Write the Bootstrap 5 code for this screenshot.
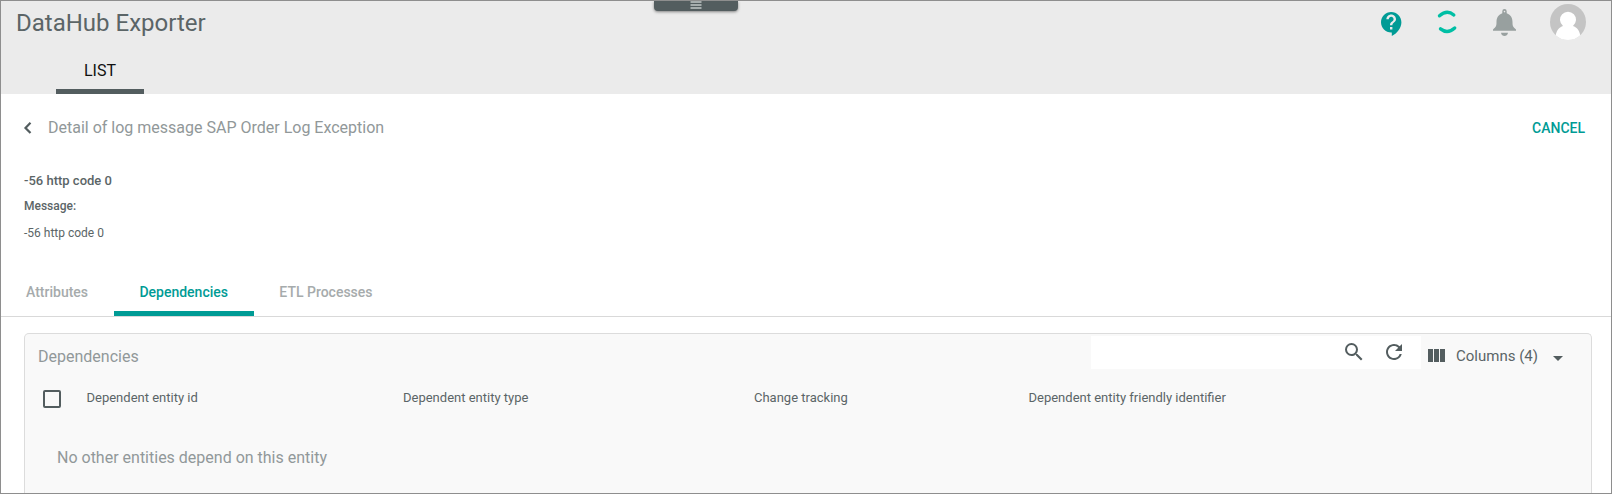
<!DOCTYPE html>
<html lang="en">
<head>
<meta charset="utf-8">
<title>DataHub Exporter</title>
<link href="https://cdn.jsdelivr.net/npm/bootstrap@5.3.0/dist/css/bootstrap.min.css" rel="stylesheet">
<style>
body{font-family:Roboto,"Liberation Sans",sans-serif;color:#5b6567;background:#fff}
svg{display:block;flex:none}
.app-frame{height:494px;border:1px solid #8e8e8e}
.app-head{height:93px;background:#ebebeb}
.app-title{font-size:24px;line-height:28px;padding:8px 0 0 15px;font-weight:400;margin:0;color:#5b6567}
.drawer-grip{top:0;left:653px;width:84px;height:10px;background:#535d5f;border-radius:0 0 4px 4px;box-shadow:0 1px 3px rgba(0,0,0,.45)}
.main-tab{width:88px;height:45px;margin-left:55px;border-bottom:5px solid #535d5f;color:#111;font-size:16px;line-height:44px}
.head-icons{height:42px}
.detail-bar{height:66px;padding:1px 26px 0 19px;font-size:16px;color:#919899}
.detail-bar .lead-text{padding-left:14px}
.btn-cancel{font-size:14px;font-weight:500;color:#009b95;line-height:20px}
.log-info{padding-left:23px;height:114px;line-height:20px}
.log-name{font-size:13px;font-weight:500;padding-top:11px}
.log-label{font-size:12px;font-weight:500;padding-top:5px}
.log-text{font-size:12px;padding-top:7px}
.sub-tabs{height:43px;border-bottom:1px solid #d9d9d9;font-size:14px;font-weight:500;color:#a6abac}
.sub-tabs .nav-link{color:inherit;padding:0 25.7px;line-height:36px;height:42px}
.sub-tabs .nav-link:first-child{padding-left:25px}
.sub-tabs .nav-link.active{color:#009b95;border-bottom:5px solid #009b95}
.dep-panel{margin:16px 19px 0 23px;height:170px;background:#f9f9f9;border:1px solid #dcdcdc;border-radius:5px 5px 0 0;border-bottom:0}
.dep-title{font-size:16px;color:#919899;padding:12px 0 0 13px;line-height:22px}
.search-box{width:330px;height:33px;margin-top:2px;background:#fff;padding:4px 15px 0 0;gap:16px}
.col-picker{width:170px;font-size:15px;padding:0 21px 0 3px;height:44px}
.check-sq{width:18px;height:18px;border:2px solid #535d5f;border-radius:2px;margin:6px 0 0 18px}
.dep-cols{height:47px;grid-template-columns:61.5px 316.5px 351px 274.5px 1fr;font-size:13px;line-height:36px}
.dep-empty{font-size:16px;color:#919899;padding:19px 0 0 32px}
</style>
</head>
<body>
<div class="app-frame position-relative overflow-hidden">
  <header class="app-head d-flex justify-content-between">
    <div>
      <h1 class="app-title">DataHub Exporter</h1>
      <div class="pt-2 mt-1"><div class="main-tab text-center">LIST</div></div>
    </div>
    <div class="head-icons d-flex me-2">
      <svg width="231" height="42" viewBox="1372 1 231 42">
        <path transform="translate(1377.4 9.6) scale(1.2)" fill="#009b95" d="M11.5 2C6.81 2 3 5.81 3 10.5S6.81 19 11.5 19h.5v3c4.86-2.34 8-7 8-11.5C20 5.81 16.19 2 11.5 2zm1 14.5h-2v-2h2v2zm0-3.5h-2c0-3.25 3-3 3-5 0-1.1-.9-2-2-2s-2 .9-2 2h-2c0-2.21 1.79-4 4-4s4 1.79 4 4c0 2.5-3 2.75-3 5z"/>
        <path d="M1439.500 15.800Q1447 9.300 1453.800 15M1440.500 28.900Q1447.500 34.500 1454.700 28" fill="none" stroke="#00bfa5" stroke-width="3.400" stroke-linecap="round"/>
        <path fill="#98a09f" fill-rule="evenodd" d="M1502.300 13.200V11.300a2.200 2.200 0 0 1 4.400 0v1.900c4.300 1.500 5.800 5 5.800 8.800 0 4 .4 5 3.500 7.500v1.300h-23v-1.300c3.100-2.500 3.500-3.500 3.500-7.500 0-3.800 1.500-7.300 5.800-8.800zM1503.700 11.600a.8.8 0 1 0 1.600 0a.8.8 0 1 0-1.600 0zM1501 32.700h7c-.6 4.300-6.400 4.300-7 0z"/>
        <circle cx="1568" cy="22" r="18" fill="#c4c4c4"/>
        <path fill="#fff" d="M1555.700 35.200c1-5 3.800-8.200 7.300-9.200a8 8 0 1 1 10 0c3.500 1 6.300 4.200 7.300 9.200a18 18 0 0 1-24.600 0z"/>
      </svg>
    </div>
  </header>
  <div class="drawer-grip position-absolute"><svg width="84" height="10"><path d="M36.500 1h11M36.500 4h11M36.500 7h11" stroke="#c2c8c7" stroke-width="1.700"/></svg></div>

  <div class="detail-bar d-flex align-items-center">
    <svg width="14" height="14" viewBox="20 120 14 14"><path d="M30.500 121.800L25.500 126.900l5 5.100" fill="none" stroke="#535d5f" stroke-width="2.200"/></svg>
    <span class="lead-text">Detail of log message SAP Order Log Exception</span>
    <span class="btn-cancel ms-auto">CANCEL</span>
  </div>
  <div class="log-info">
    <div class="log-name">-56 http code 0</div>
    <div class="log-label">Message:</div>
    <div class="log-text">-56 http code 0</div>
  </div>
  <nav class="sub-tabs nav">
    <a class="nav-link">Attributes</a>
    <a class="nav-link active">Dependencies</a>
    <a class="nav-link">ETL Processes</a>
  </nav>
  <section class="dep-panel">
    <div class="d-flex" style="height:46px">
      <div class="dep-title me-auto">Dependencies</div>
      <div class="search-box d-flex justify-content-end">
        <svg width="24" height="24" viewBox="0 0 24 24" fill="#535d5f"><path d="M15.500 14h-.79l-.28-.27A6.471 6.471 0 0 0 16 9.500 6.500 6.500 0 1 0 9.500 16c1.610 0 3.090-.59 4.230-1.570l.27.28v.79l5 4.990L20.490 19l-4.990-5zm-6 0C7.010 14 5 11.990 5 9.500S7.010 5 9.500 5 14 7.010 14 9.500 11.990 14 9.500 14z"/></svg>
        <svg width="24" height="24" viewBox="0 0 24 24" fill="#535d5f"><path d="M17.650 6.350A7.958 7.958 0 0 0 12 4c-4.420 0-7.990 3.580-7.990 8s3.570 8 7.990 8c3.730 0 6.840-2.550 7.730-6h-2.080A5.990 5.990 0 0 1 12 18c-3.310 0-6-2.690-6-6s2.690-6 6-6c1.660 0 3.140.69 4.220 1.780L13 11h7V4l-2.350 2.350z"/></svg>
      </div>
      <div class="col-picker d-flex align-items-center">
        <svg width="24" height="24" viewBox="0 0 24 24" fill="#535d5f"><path d="M10 18h5V5h-5v13zm-6 0h5V5H4v13zM16 5v13h5V5h-5z"/></svg>
        <span class="ms-2">Columns (4)</span>
        <svg class="ms-auto" width="24" height="24" viewBox="0 -2 24 24" fill="#535d5f"><path d="M7 10l5 5 5-5z"/></svg>
      </div>
    </div>
    <div class="dep-cols d-grid">
      <div class="pt-1"><div class="check-sq"></div></div>
      <span>Dependent entity id</span><span>Dependent entity type</span><span>Change tracking</span><span>Dependent entity friendly identifier</span>
    </div>
    <div class="dep-empty">No other entities depend on this entity</div>
  </section>
</div>
<script src="https://cdn.jsdelivr.net/npm/bootstrap@5.3.0/dist/js/bootstrap.bundle.min.js"></script>
</body>
</html>
